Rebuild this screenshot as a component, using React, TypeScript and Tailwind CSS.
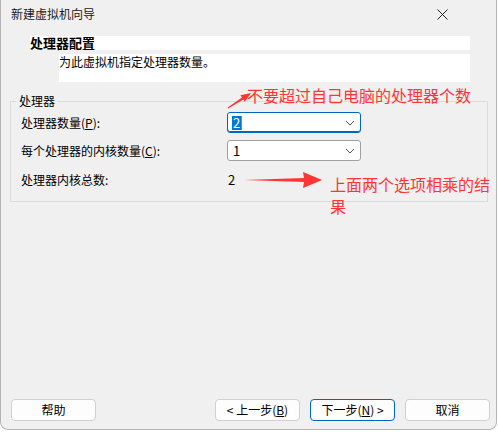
import React from "react";

const FONT = { fontFamily: '"Noto Sans CJK SC", "Noto Sans", sans-serif' };

function Chevron() {
  return (
    <svg width="10" height="6" viewBox="0 0 10 6" className="shrink-0">
      <path d="M1 1 L5 5 L9 1" fill="none" stroke="#555" strokeWidth="1" />
    </svg>
  );
}

function Select({ value, focused }: { value: string; focused?: boolean }) {
  return (
    <div
      className={
        "w-[134px] h-[21px] bg-white rounded-[3px] flex items-center justify-between pl-[4px] pr-[5px] border " +
        (focused ? "border-[#0067c0] shadow-[inset_0_-1px_0_#0067c0]" : "border-[#a0a0a0]")
      }
    >
      {focused ? (
        <span className="flex items-center h-[14px]">
          <span className="bg-[#0078d7] text-white text-[13px] leading-[14px] px-[1px]">{value}</span>
          <span className="w-[1px] h-[14px] bg-[#e07020]" />
        </span>
      ) : (
        <span className="text-[13px] leading-[14px] text-black pl-[1px]">{value}</span>
      )}
      <Chevron />
    </div>
  );
}

function Btn({ children, primary }: { children: React.ReactNode; primary?: boolean }) {
  return (
    <button
      type="button"
      className={
        "w-[85px] h-[22px] rounded-[4px] bg-[#fdfdfd] text-[12px] text-black flex items-center justify-center border " +
        (primary ? "border-[#0067c0]" : "border-[#d0d0d0]")
      }
    >
      {children}
    </button>
  );
}

export default function App() {
  return (
    <div className="w-[498px] h-[432px] bg-white" style={FONT}>
      <div className="relative w-[497px] h-[430px] bg-[#f0f0f0] border-l border-b border-r border-[#b4b4b4] rounded-b-[8px] flex flex-col">
        {/* Title bar */}
        <div className="h-[28px] flex items-center justify-between pl-[10px] pr-[48px] shrink-0">
          <span className="text-[12px] text-[#1a1a1a]">新建虚拟机向导</span>
          <svg width="11" height="11" viewBox="0 0 11 11">
            <path d="M0.5 0.5 L10.5 10.5 M10.5 0.5 L0.5 10.5" stroke="#222" strokeWidth="1" />
          </svg>
        </div>

        {/* Header */}
        <div className="mt-[8px] ml-[29px] mr-[26px] flex flex-col gap-[4px]">
          <div className="h-[14px] bg-white flex items-center">
            <span className="text-[13px] font-bold leading-[14px] text-black">处理器配置</span>
          </div>
          <div className="ml-[29px] h-[28px] bg-white">
            <span className="block text-[12px] leading-[14px] pt-[1px] text-black">为此虚拟机指定处理器数量。</span>
          </div>
        </div>

        {/* Group box */}
        <fieldset className="mt-[12px] ml-[9px] mr-[8px] border border-[#dcdcdc] pl-[10px] pb-[10px] pt-[4px]">
          <legend className="px-[2px] -ml-[4px] text-[12px] leading-[14px] text-black">处理器</legend>
          <div className="flex flex-col gap-[7px] text-[12px] text-black">
            <div className="flex items-center h-[21px]">
              <span className="w-[206px]">
                处理器数量(<span className="underline">P</span>):
              </span>
              <Select value="2" focused />
            </div>
            <div className="flex items-center h-[21px]">
              <span className="w-[206px]">
                每个处理器的内核数量(<span className="underline">C</span>):
              </span>
              <Select value="1" />
            </div>
            <div className="flex items-center h-[22px] mt-[1px]">
              <span className="w-[206px]">处理器内核总数:</span>
              <span className="text-[13px] pl-[1px]">2</span>
            </div>
          </div>
        </fieldset>

        <div className="flex-1" />

        {/* Buttons */}
        <div className="h-[22px] mb-[8px] flex items-center pl-[10px] pr-[6px]">
          <Btn>帮助</Btn>
          <div className="flex-1" />
          <div className="flex gap-[10px]">
            <Btn>
              &lt; 上一步(<span className="underline">B</span>)
            </Btn>
            <Btn primary>
              下一步(<span className="underline">N</span>) &gt;
            </Btn>
            <Btn>取消</Btn>
          </div>
        </div>

        {/* Annotations */}
        <span className="absolute left-[246px] top-[85px] text-[16px] leading-[20px] text-[#ff3535] whitespace-nowrap">
          不要超过自己电脑的处理器个数
        </span>
        <span className="absolute left-[329px] top-[173px] w-[160px] text-[16px] leading-[22px] text-[#ff3535]">
          上面两个选项相乘的结果
        </span>
        <svg className="absolute left-0 top-0 pointer-events-none" width="498" height="432">
          <polygon
            points="227.3,108.4 242.3,99.5 243.8,101.8 250,93 239.4,95.2 240.9,97.5 226.7,107.6"
            fill="#ff3535"
          />
          <polygon points="243,180 303,178 302,172 321,180 302,188 303,182" fill="#ff3535" />
        </svg>
      </div>
    </div>
  );
}
